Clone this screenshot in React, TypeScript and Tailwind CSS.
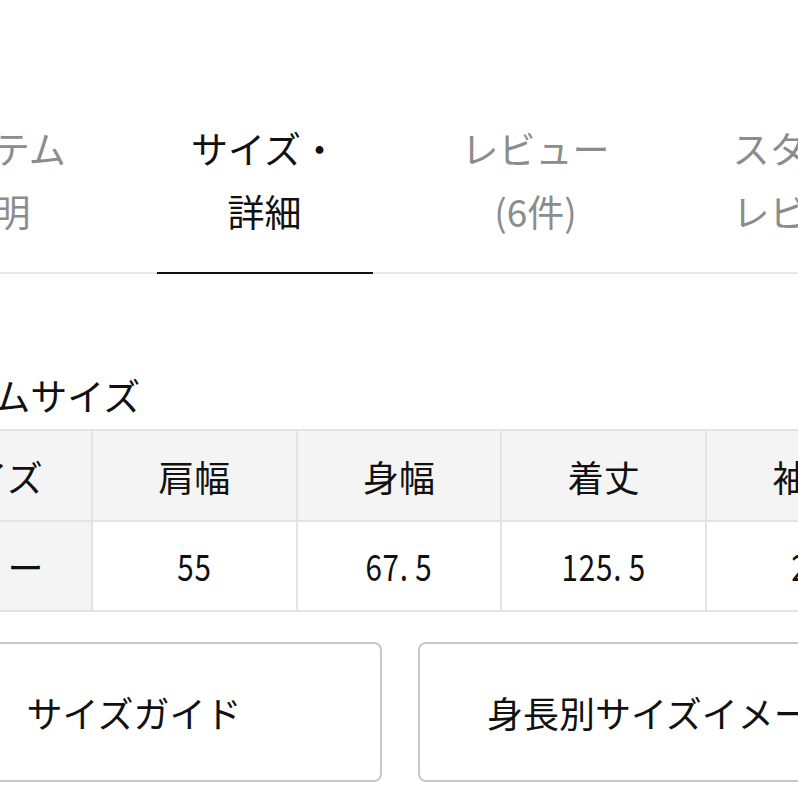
import React from "react";

const tabs = [
  { l1: "アイテム", l2: "説明", active: false },
  { l1: "サイズ・", l2: "詳細", active: true },
  { l1: "レビュー", l2: "(6件)", active: false },
  { l1: "スタッフ", l2: "レビュー", active: false },
];

const heads = ["サイズ", "肩幅", "身幅", "着丈", "袖丈"];
const vals = ["55", "67.5", "125.5", "23"];

function Num({ v }: { v: string }) {
  const [a, b] = v.split(".");
  return (
    <span className="inline-block scale-x-[0.8] text-[37px] tracking-[1px]">
      {a}
      {b !== undefined && (
        <>
          <span className="mr-[8px]">.</span>
          {b}
        </>
      )}
    </span>
  );
}

export default function App() {
  return (
    <div className="w-[798px] h-[798px] overflow-hidden bg-white font-['Noto_Sans_CJK_JP',sans-serif] text-[#111]">
      <div className="w-[1084px] ml-[-142px] pt-[117px]">
        <div className="flex border-b-2 border-[#e8e8e8]">
          {tabs.map((t, i) => (
            <div key={i} className="w-[271px] flex flex-col items-center">
              <div
                className={`text-[37px] leading-[63px] text-center ${
                  t.active ? "text-[#111]" : "text-[#8c8c8c]"
                }`}
              >
                <div>{t.l1}</div>
                <div>{t.l2}</div>
              </div>
              <div
                className={`w-[216px] h-[2px] mt-[29px] -mb-[2px] ${
                  t.active ? "bg-[#111]" : "bg-transparent"
                }`}
              />
            </div>
          ))}
        </div>
        <div className="px-[28px]">
          <div className="mt-[97px] text-[37px] leading-[48px]">アイテムサイズ</div>
          <div className="mt-[10px] grid grid-cols-5 w-[1026px] border-t-2 border-l-2 border-[#e3e3e3]">
            {heads.map((h, i) => (
              <div
                key={i}
                className="h-[91px] flex items-center justify-center bg-[#f4f4f4] border-r-2 border-b-2 border-[#e3e3e3] text-[36px]"
              >
                {h}
              </div>
            ))}
            <div className="h-[90px] flex items-center justify-center bg-[#f4f4f4] border-r-2 border-b-2 border-[#e3e3e3] text-[36px]">
              フリー
            </div>
            {vals.map((v, i) => (
              <div
                key={i}
                className="h-[90px] flex items-center justify-center bg-white border-r-2 border-b-2 border-[#e3e3e3]"
              >
                <Num v={v} />
              </div>
            ))}
          </div>
          <div className="mt-[30px] grid grid-cols-2 gap-[36px] w-[1028px]">
            <div className="h-[140px] rounded-[8px] border-2 border-[#c8c8c8] flex items-center justify-center text-[36px]">
              サイズガイド
            </div>
            <div className="h-[140px] rounded-[8px] border-2 border-[#c8c8c8] flex items-center justify-center text-[36px]">
              身長別サイズイメージ
            </div>
          </div>
        </div>
      </div>
    </div>
  );
}
